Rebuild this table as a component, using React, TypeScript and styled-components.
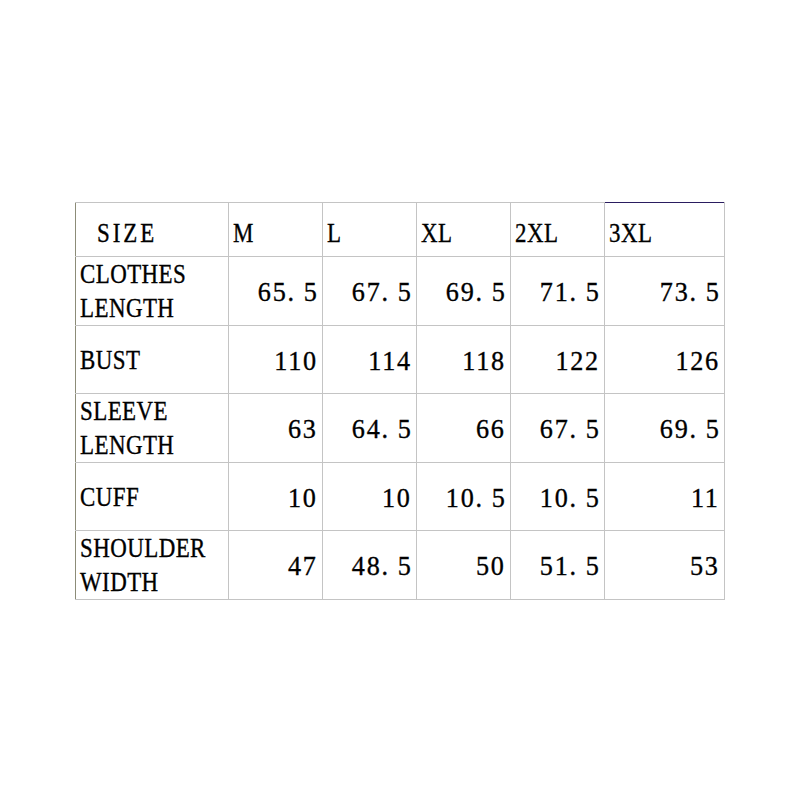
import React from "react";
import styled, { createGlobalStyle } from "styled-components";

const Global = createGlobalStyle`
  html, body { margin: 0; padding: 0; background: #ffffff; }
  body { font-family: "Liberation Serif", "Times New Roman", serif; color: #000; }
`;

const Page = styled.div`
  width: 800px;
  height: 800px;
  box-sizing: border-box;
  padding: 202px 0 0 75px;
`;

const Table = styled.table`
  border-collapse: collapse;
  table-layout: fixed;
  width: 649px;
  font-size: 27px;
  border-left: 1px solid #8c8c78;
  -webkit-text-stroke: 0.35px #000;
`;

const HeadCell = styled.td<{ $first?: boolean; $accent?: boolean }>`
  box-sizing: border-box;
  border: 1px solid #c4c4c4;
  border-top-color: ${(p) => (p.$accent ? "#2a1d60" : "#c4c4c4")};
  border-left-color: ${(p) => (p.$first ? "#8c8c78" : "#c4c4c4")};
  padding: 6px 0 0 ${(p) => (p.$first ? "21px" : "4px")};
  vertical-align: middle;
  text-align: left;
  line-height: 34px;
  white-space: nowrap;
`;

const LabelCell = styled.td`
  border: 1px solid #c4c4c4;
  border-left-color: #8c8c78;
  padding: 0 0 0 4px;
  vertical-align: middle;
  line-height: 34px;
  white-space: nowrap;
`;

const NumCell = styled.td`
  border: 1px solid #c4c4c4;
  padding: 3px 4px 0 0;
  text-align: right;
  vertical-align: middle;
  white-space: nowrap;
`;

const Narrow = styled.span<{ $right?: boolean; $spaced?: boolean }>`
  display: inline-block;
  transform: scaleX(${(p) => (p.$right ? 0.97 : 0.85)});
  transform-origin: ${(p) => (p.$right ? "right" : "left")} center;
  letter-spacing: ${(p) => (p.$right ? "1.8px" : p.$spaced ? "3.5px" : "0.5px")};
`;

const Row = styled.tr<{ $h: number }>`
  height: ${(p) => p.$h}px;
`;

const Dot = styled.span`
  padding-right: 8px;
`;

const Num = ({ v }: { v: string }) => {
  const [a, b] = v.split(".");
  if (b === undefined) return <>{a}</>;
  return (
    <>
      {a}
      <Dot>.</Dot>
      {b}
    </>
  );
};

const cols = [153, 94, 94, 94, 94, 120];
const sizes = ["M", "L", "XL", "2XL", "3XL"];
const rows: { label: string[]; vals: string[]; h: number }[] = [
  { label: ["CLOTHES", "LENGTH"], vals: ["65.5", "67.5", "69.5", "71.5", "73.5"], h: 69 },
  { label: ["BUST"], vals: ["110", "114", "118", "122", "126"], h: 68 },
  { label: ["SLEEVE", "LENGTH"], vals: ["63", "64.5", "66", "67.5", "69.5"], h: 68 },
  { label: ["CUFF"], vals: ["10", "10", "10.5", "10.5", "11"], h: 68 },
  { label: ["SHOULDER", "WIDTH"], vals: ["47", "48.5", "50", "51.5", "53"], h: 68 },
];

export default function App() {
  return (
    <Page>
      <Global />
      <Table>
        <colgroup>
          {cols.map((w, i) => (
            <col key={i} style={{ width: w }} />
          ))}
        </colgroup>
        <tbody>
          <Row $h={54}>
            <HeadCell $first>
              <Narrow $spaced>SIZE</Narrow>
            </HeadCell>
            {sizes.map((s, i) => (
              <HeadCell key={s} $accent={i === sizes.length - 1}>
                <Narrow>{s}</Narrow>
              </HeadCell>
            ))}
          </Row>
          {rows.map((r) => (
            <Row key={r.label.join(" ")} $h={r.h}>
              <LabelCell>
                <Narrow>
                  {r.label.map((l, i) => (
                    <React.Fragment key={l}>
                      {i > 0 && <br />}
                      {l}
                    </React.Fragment>
                  ))}
                </Narrow>
              </LabelCell>
              {r.vals.map((v, i) => (
                <NumCell key={i}>
                  <Narrow $right>
                    <Num v={v} />
                  </Narrow>
                </NumCell>
              ))}
            </Row>
          ))}
        </tbody>
      </Table>
    </Page>
  );
}
